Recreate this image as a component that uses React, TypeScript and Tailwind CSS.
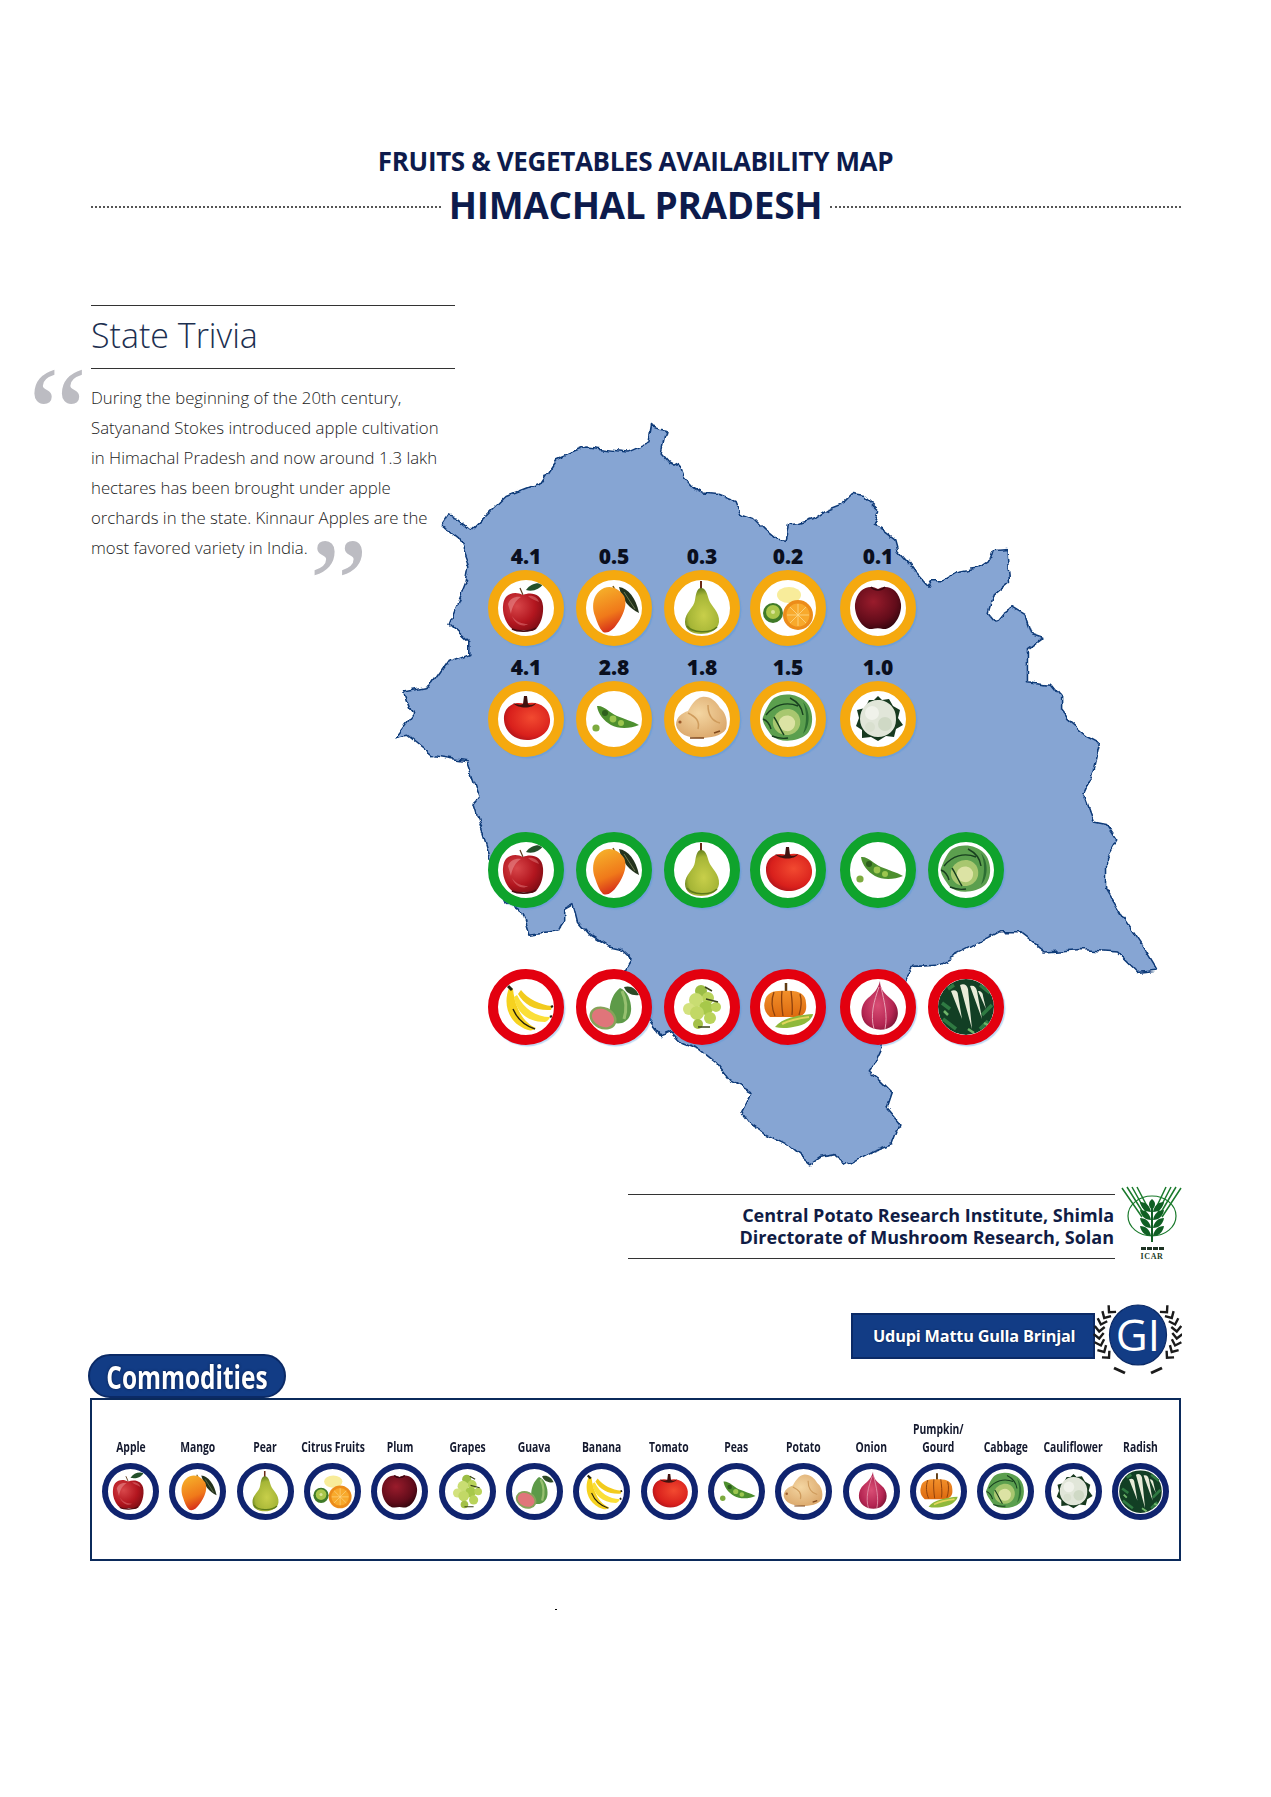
import type { ReactNode } from "react";

type Fruit =
  | "apple" | "mango" | "pear" | "citrus" | "plum" | "grapes" | "guava" | "banana"
  | "tomato" | "peas" | "potato" | "onion" | "pumpkin" | "cabbage" | "cauliflower" | "radish";

const MAP_PATH =
  "M530 45 L545 50 L557 52 L553 68 L547 95 L565 115 L585 125 L592 145 L610 165 L630 175 L660 178 L690 190 L700 215 L730 225 L750 245 L775 266 L790 268 L797 238 L820 235 L850 225 L880 205 L905 195 L922 178 L945 182 L975 210 L965 240 L985 250 L1005 265 L1012 290 L1030 310 L1045 330 L1070 358 L1078 345 L1100 345 L1125 330 L1150 325 L1170 322 L1195 305 L1200 288 L1225 286 L1227 320 L1230 350 L1200 375 L1190 410 L1205 428 L1220 410 L1235 400 L1260 415 L1272 450 L1295 458 L1265 480 L1265 545 L1310 550 L1330 575 L1330 600 L1345 620 L1380 650 L1408 665 L1395 720 L1375 765 L1395 820 L1420 825 L1440 855 L1420 890 L1420 950 L1450 1000 L1490 1060 L1520 1110 L1480 1115 L1440 1075 L1370 1070 L1300 1075 L1270 1050 L1250 1035 L1213 1035 L1143 1072 L1086 1101 L1044 1103 L1023 1131 L1000 1160 L978 1268 L968 1290 L955 1310 L975 1325 L1000 1350 L990 1380 L1015 1410 L1000 1450 L960 1465 L905 1495 L890 1470 L860 1475 L838 1490 L790 1450 L750 1430 L720 1410 L705 1390 L725 1350 L680 1325 L653 1290 L625 1268 L590 1254 L568 1231 L547 1239 L529 1215 L510 1190 L470 1117 L488 1088 L467 1068 L440 1062 L408 1042 L385 1015 L376 980 L358 990 L358 1015 L345 1035 L288 1042 L274 996 L245 975 L215 900 L180 785 L190 770 L165 700 L100 690 L50 650 L27 655 L60 610 L42 565 L95 555 L130 505 L170 490 L170 465 L133 430 L165 350 L170 320 L150 265 L118 240 L130 222 L150 228 L175 248 L245 180 L310 155 L340 110 L400 85 L480 95 L525 75 Z";

const drawings: Record<Fruit, ReactNode> = {
  apple: (
    <>
      <path d="M22 8 L25 15" stroke="#5c3a1e" strokeWidth="1.2" />
      <path d="M28 10 C32 4 39 2 45 4 C42 9 35 12 28 10Z" fill="#23502a" />
      <path d="M25 15 C18 11 6 12 5 26 C4 38 12 51 20 51 C23 51 25 50 26 50 C28 50 30 51 33 51 C40 51 46 38 45 26 C44 13 32 12 25 15Z" fill="url(#gApple)" />
      <path d="M10 24 C12 18 18 16 23 17 C18 20 14 26 13 34Z" fill="#e8888a" opacity=".6" />
      <path d="M30 16 C35 15 40 18 41 22 C37 20 33 19 30 16Z M14 36 C18 42 24 44 30 44 C26 47 18 46 14 36Z" fill="#e8888a" opacity=".45" />
      <path d="M14 49 C20 52 32 52 38 48" stroke="#4c0c12" strokeWidth="1.6" fill="none" />
    </>
  ),
  mango: (
    <>
      <path d="M27 6 L29 10" stroke="#7a5a12" strokeWidth="1.5" />
      <path d="M33 7 C42 8 50 18 53 33 C44 29 36 20 33 7Z" fill="#24331c" />
      <path d="M38 12 L49 29" stroke="#7d8a5e" strokeWidth=".8" />
      <path d="M18 8 C26 5 33 9 38 16 C42 24 37 36 31 44 C27 50 22 54 17 52 C13 48 11 42 9 36 C5 26 7 13 18 8Z" fill="url(#gMango)" />
    </>
  ),
  pear: (
    <>
      <path d="M27 1 L27 9" stroke="#6b2a16" strokeWidth="2" />
      <path d="M27 8 C32 8 33 14 35 20 C37 26 46 32 45 42 C44 50 36 54 27 54 C18 54 11 50 11 42 C11 32 20 28 21 20 C22 14 23 8 27 8Z" fill="url(#gPear)" />
      <path d="M13 46 C18 53 36 54 43 47" stroke="#5c7a1a" strokeWidth="1.6" fill="none" />
    </>
  ),
  citrus: (
    <>
      <ellipse cx="29" cy="15" rx="12" ry="8" fill="#f8ec9a" />
      <ellipse cx="13" cy="33" rx="10" ry="10" fill="#3f7a28" />
      <ellipse cx="13" cy="32" rx="7" ry="7" fill="#a9c64a" />
      <circle cx="13" cy="32" r="2" fill="#dbe59a" />
      <circle cx="38" cy="35" r="15" fill="#ec8c1a" />
      <circle cx="38" cy="35" r="11.5" fill="#f8a92c" />
      <path d="M38 24 V46 M27 35 H49 M30 27 L46 43 M46 27 L30 43" stroke="#fbd98c" strokeWidth=".8" />
    </>
  ),
  plum: (
    <>
      <path d="M28 9 C20 4 7 8 5 24 C4 36 13 50 22 49 C26 48 30 48 33 49 C43 50 52 36 51 24 C49 8 36 4 28 9Z" fill="url(#gPlum)" />
      <path d="M21 7 C25 11 31 11 35 7" stroke="#3a0610" strokeWidth="1.6" fill="none" />
    </>
  ),
  grapes: (
    <g fill="#b9d35a">
      <circle cx="27" cy="12" r="6" fill="#9bbd45" />
      <circle cx="34" cy="19" r="6" />
      <circle cx="22" cy="21" r="7" fill="#c9dd72" />
      <circle cx="32" cy="29" r="7" fill="#a7c84a" />
      <circle cx="15" cy="30" r="6" fill="#d3e27e" />
      <circle cx="42" cy="28" r="5" />
      <circle cx="23" cy="34" r="7" fill="#c2d866" />
      <circle cx="36" cy="39" r="6" />
      <circle cx="24" cy="45" r="5" fill="#a4c048" />
      <path d="M32 20 L44 23 M24 48 H36 M31 8 L38 12" stroke="#38421a" strokeWidth="1.5" />
    </g>
  ),
  guava: (
    <>
      <path d="M38 8 C44 6 50 9 53 16 C46 17 40 14 38 8Z" fill="#2d4a26" />
      <path d="M34 9 C42 12 46 24 45 32 C44 42 36 46 28 44 C20 36 24 16 34 9Z" fill="#5d9a48" />
      <path d="M36 12 C40 20 41 30 38 40" stroke="#97c070" strokeWidth="3" fill="none" />
      <ellipse cx="17" cy="39" rx="14" ry="11" transform="rotate(25 17 39)" fill="#86a35a" />
      <ellipse cx="17" cy="39" rx="11.5" ry="8.5" transform="rotate(25 17 39)" fill="#e0757a" />
    </>
  ),
  banana: (
    <>
      <path d="M11 9 C5 24 9 44 30 51 C33 52 36 51 38 49 C26 44 17 30 15 10Z" fill="#f6d21f" />
      <path d="M16 18 C18 32 28 43 47 43 C50 42 52 39 52 38 C38 38 26 30 19 16Z" fill="#fbdf38" />
      <path d="M20 15 C26 26 38 32 53 31 C54 28 55 27 54 27 C42 26 30 20 23 11Z" fill="#f2cb1d" />
      <path d="M15 30 C20 42 28 47 37 50" stroke="#26200e" strokeWidth="1.4" fill="none" />
      <path d="M10 7 L14 11" stroke="#22200e" strokeWidth="3" />
      <path d="M52 38 L54 37 M53 28 L55 27" stroke="#22200e" strokeWidth="2.5" />
    </>
  ),
  tomato: (
    <>
      <path d="M27 13 C16 9 5 16 6 29 C7 42 18 49 29 49 C41 49 53 41 52 28 C51 16 39 9 27 13Z" fill="url(#gTomato)" />
      <path d="M15 12 C20 14 23 14 25 13 L26 5 L29 5 L30 13 C33 15 36 13 38 12 C35 18 20 18 15 12Z" fill="#41120f" />
    </>
  ),
  peas: (
    <>
      <path d="M11 15 C18 14 24 22 31 25 C38 28 46 30 53 34 C44 38 32 38 25 34 C18 30 12 23 11 15Z" fill="#4d8f2f" />
      <circle cx="19" cy="22" r="3" fill="#2d5f1c" />
      <circle cx="27" cy="28" r="3.4" fill="#9cc64f" />
      <circle cx="35" cy="32" r="3" fill="#9cc64f" />
      <circle cx="10" cy="37" r="3.6" fill="#7dab3f" />
    </>
  ),
  potato: (
    <>
      <path d="M28 6 C36 5 42 10 46 17 C52 22 54 30 52 38 C48 45 36 47 26 47 C14 47 4 43 2 34 C2 26 8 22 14 20 C18 13 22 7 28 6Z" fill="url(#gPotato)" />
      <path d="M14 22 C22 26 26 30 24 38 M34 14 C34 24 38 30 46 32" stroke="#cf9c5d" strokeWidth="1.5" fill="none" />
      <circle cx="6" cy="31" r="1.6" fill="#9c5a2a" />
      <path d="M16 47 H30 M40 42 L46 40" stroke="#80481c" strokeWidth="1.6" />
    </>
  ),
  onion: (
    <>
      <path d="M30 2 C30 10 34 14 41 20 C50 27 50 40 42 47 C36 52 24 52 17 46 C9 39 10 26 18 19 C24 14 28 10 30 2Z" fill="url(#gOnion)" />
      <path d="M29 8 C24 22 20 36 24 50 M31 8 C34 22 38 36 35 50" stroke="#e7a2b5" strokeWidth="1" fill="none" />
    </>
  ),
  pumpkin: (
    <>
      <path d="M26 4 V13" stroke="#5e3a12" strokeWidth="2.5" />
      <path d="M5 22 C6 14 14 11 26 12 C38 11 46 15 46 24 C47 32 45 36 38 38 L10 38 C5 34 3 28 5 22Z" fill="url(#gPumpkin)" />
      <path d="M14 13 C11 21 12 30 15 37 M22 12 C21 20 22 30 23 37 M31 12 C32 20 33 28 32 36 M40 15 C42 22 41 30 39 36" stroke="#8f420d" strokeWidth="1.3" fill="none" />
      <path d="M15 48 C22 39 38 36 53 35 C53 38 48 45 38 47 C30 49 22 50 15 48Z" fill="#8fb83a" />
      <path d="M22 45 C30 41 40 39 49 38" stroke="#e3d65c" strokeWidth="2.2" fill="none" />
    </>
  ),
  cabbage: (
    <>
      <path d="M14 7 C24 1 38 3 46 11 C54 19 54 36 47 43 C38 51 20 52 12 45 C9 41 1 31 3 26 C5 22 8 12 14 7Z" fill="#5b9f4e" />
      <path d="M43 11 C51 20 50 36 43 43 C47 32 47 20 43 11Z" fill="#2d6e33" />
      <path d="M14 26 C20 16 34 15 39 25 C43 34 37 44 27 44 C17 44 10 35 14 26Z" fill="#a8c76f" />
      <path d="M20 28 C25 22 33 24 35 30 C36 37 31 41 26 40 C20 39 17 33 20 28Z" fill="#dce3a4" />
      <path d="M6 24 C14 14 26 10 38 15 M3 28 C8 30 10 34 11 38 M12 45 C17 47 22 48 28 47 M14 26 C18 32 20 38 24 44 M30 7 C36 10 42 16 43 24" stroke="#173f1f" strokeWidth="1.4" fill="none" />
    </>
  ),
  cauliflower: (
    <>
      <path d="M28 5 L32 9 L39 8 L43 15 L50 19 L48 27 L53 34 L46 38 L44 46 L36 45 L28 50 L21 46 L12 47 L12 39 L6 35 L9 27 L7 19 L15 17 L19 9 L24 9Z" fill="#17391f" />
      <path d="M28 9 C38 9 47 17 46 29 C46 39 38 46 28 46 C18 46 10 38 10 28 C10 17 18 9 28 9Z" fill="#e1e6d9" />
      <circle cx="22" cy="22" r="7" fill="#f0f2ea" />
      <circle cx="35" cy="33" r="7" fill="#cfd9c5" />
      <circle cx="20" cy="36" r="5" fill="#d9e0cf" />
    </>
  ),
  radish: (
    <>
      <circle cx="28" cy="28" r="28" fill="#123f24" />
      <path d="M4 24 L12 30 M5 40 L18 50 M44 36 L54 26 M42 50 L50 42 M42 6 L52 14 M10 10 L16 6" stroke="#2f7a42" strokeWidth="3.5" />
      <path d="M6 32 L10 36 M46 44 L50 46 M30 50 L36 54" stroke="#6fb56a" strokeWidth="2.5" />
      <path d="M13 12 C17 10 20 12 20 16 L24 40 Z M22 6 C26 4 29 6 30 10 L34 50 Z M32 7 C36 6 38 8 39 12 L44 40 Z M40 12 C43 12 45 14 45 17 L48 30 Z" fill="#e8ecd8" />
    </>
  ),
};

const FruitBadge = ({ fruit, ring, big }: { fruit: Fruit; ring: string; big?: boolean }) => (
  <div
    className={`${big ? "w-[76px] h-[76px] border-[10px] shadow-[1.5px_1.5px_1px_rgba(70,150,225,0.35)]" : "w-[57px] h-[57px] border-[6px]"} ${ring} rounded-full bg-white overflow-hidden shrink-0`}>
    <svg viewBox="0 0 56 56" className={`w-full h-full ${big ? "blur-[0.5px]" : "scale-95 blur-[0.4px]"}`}>
      {drawings[fruit]}
    </svg>
  </div>
);

const MarkerRow = ({
  fruits,
  values,
  ring,
  className,
}: {
  fruits: Fruit[];
  values?: string[];
  ring: string;
  className: string;
}) => (
  <div className={`grid grid-cols-[88px_88px_86px_90px_88px_76px] ${className}`}>
    {fruits.map((fruit, i) => (
      <div key={fruit} className="flex flex-col items-center w-[76px]">
        {values && (
          <span className="h-[24px] mb-[2px] text-[21px] leading-[24px] font-extrabold text-[#0a0f1e]">
            {values[i]}
          </span>
        )}
        <FruitBadge fruit={fruit} ring={ring} big />
      </div>
    ))}
  </div>
);

const commodities: { fruit: Fruit; label: ReactNode }[] = [
  { fruit: "apple", label: "Apple" },
  { fruit: "mango", label: "Mango" },
  { fruit: "pear", label: "Pear" },
  { fruit: "citrus", label: "Citrus Fruits" },
  { fruit: "plum", label: "Plum" },
  { fruit: "grapes", label: "Grapes" },
  { fruit: "guava", label: "Guava" },
  { fruit: "banana", label: "Banana" },
  { fruit: "tomato", label: "Tomato" },
  { fruit: "peas", label: "Peas" },
  { fruit: "potato", label: "Potato" },
  { fruit: "onion", label: "Onion" },
  { fruit: "pumpkin", label: <>Pumpkin/<br />Gourd</> },
  { fruit: "cabbage", label: "Cabbage" },
  { fruit: "cauliflower", label: "Cauliflower" },
  { fruit: "radish", label: "Radish" },
];

const Gradients = () => (
  <svg className="absolute w-0 h-0">
    <defs>
      <radialGradient id="gApple" cx="35%" cy="35%" r="75%">
        <stop offset="0%" stopColor="#d8474a" />
        <stop offset="60%" stopColor="#b3161f" />
        <stop offset="100%" stopColor="#7c0d14" />
      </radialGradient>
      <linearGradient id="gMango" x1="0.3" y1="0" x2="0.6" y2="1">
        <stop offset="0%" stopColor="#f6b02a" />
        <stop offset="60%" stopColor="#f0791a" />
        <stop offset="100%" stopColor="#d3261a" />
      </linearGradient>
      <radialGradient id="gPear" cx="55%" cy="60%" r="60%">
        <stop offset="0%" stopColor="#c8cf4a" />
        <stop offset="75%" stopColor="#a5b536" />
        <stop offset="100%" stopColor="#65801f" />
      </radialGradient>
      <radialGradient id="gPlum" cx="40%" cy="35%" r="70%">
        <stop offset="0%" stopColor="#9a1c2c" />
        <stop offset="70%" stopColor="#620c1a" />
        <stop offset="100%" stopColor="#35060e" />
      </radialGradient>
      <radialGradient id="gTomato" cx="60%" cy="40%" r="70%">
        <stop offset="0%" stopColor="#f24a30" />
        <stop offset="70%" stopColor="#d9201c" />
        <stop offset="100%" stopColor="#a3111a" />
      </radialGradient>
      <radialGradient id="gOnion" cx="45%" cy="50%" r="60%">
        <stop offset="0%" stopColor="#d94e75" />
        <stop offset="70%" stopColor="#b42552" />
        <stop offset="100%" stopColor="#7e1536" />
      </radialGradient>
      <radialGradient id="gPotato" cx="45%" cy="40%" r="70%">
        <stop offset="0%" stopColor="#f4d6a2" />
        <stop offset="100%" stopColor="#d9a467" />
      </radialGradient>
      <linearGradient id="gPumpkin" x1="0" y1="0" x2="0" y2="1">
        <stop offset="0%" stopColor="#f2902a" />
        <stop offset="100%" stopColor="#dd6a10" />
      </linearGradient>
      <filter id="roughEdge" x="-2%" y="-2%" width="104%" height="104%">
        <feTurbulence type="fractalNoise" baseFrequency="0.035" numOctaves="3" seed="4" />
        <feDisplacementMap in="SourceGraphic" scale="16" xChannelSelector="R" yChannelSelector="G" />
      </filter>
    </defs>
  </svg>
);

const wheatLeaves = [18, 26, 34, 42];

const IcarLogo = () => (
  <svg viewBox="0 0 61 74" className="w-[61px] h-[74px] ml-[6px] shrink-0">
    <g stroke="#1a7a2c" strokeWidth="1.5" fill="none">
      <path d="M1 2 L21 31 M6 1 L23 28 M11 1 L25 26 M16 1 L27 22" />
      <path d="M60 2 L41 31 M55 1 L39 28 M50 1 L37 26 M45 1 L35 22" />
      <ellipse cx="31" cy="30" rx="24" ry="20" strokeWidth="1.2" />
    </g>
    <g fill="#0f5f23">
      <path d="M31 13 C35 16 35 20 31 24 C27 20 27 16 31 13Z" />
      {wheatLeaves.map((y) => (
        <g key={y}>
          <path d={`M30 ${y + 8} C24 ${y + 8} 20 ${y + 4} 19 ${y - 2} C25 ${y - 2} 29 ${y + 2} 30 ${y + 8}Z`} />
          <path d={`M32 ${y + 8} C38 ${y + 8} 42 ${y + 4} 43 ${y - 2} C37 ${y - 2} 33 ${y + 2} 32 ${y + 8}Z`} />
        </g>
      ))}
      <path d="M30 20 H32 V56 H30Z" />
    </g>
    <path d="M20 62.5 H43" stroke="#1e3324" strokeWidth="3" strokeDasharray="5 1" />
    <text x="31" y="73" textAnchor="middle" fontSize="8" fontWeight="700" letterSpacing="0.6" fill="#26402a" fontFamily="'Liberation Serif', serif">ICAR</text>
  </svg>
);

const laurelAngles = [222, 210, 198, 186, 174, 162, 150, 138];

const GiEmblem = () => (
  <svg viewBox="0 0 95 78" className="w-[95px] h-[78px] -ml-[8px] relative shrink-0">
    <ellipse cx="51" cy="38" rx="30.5" ry="32" fill="#fff" />
    <ellipse cx="51" cy="38" rx="28.5" ry="30" fill="#123c85" stroke="#0b2a66" strokeWidth="1.2" />
    <text x="51" y="54" textAnchor="middle" fontSize="44" fontWeight="400" fill="#fff" fontFamily="'Open Sans', sans-serif">GI</text>
    {[0, 1].map((side) => (
      <g key={side} transform={side ? "translate(102 0) scale(-1 1)" : undefined} stroke="#1b1b1b" strokeWidth="2.4" fill="none">
        {laurelAngles.map((a) => {
          const x = 51 + 39 * Math.cos((a * Math.PI) / 180);
          const y = 38 + 34 * Math.sin((a * Math.PI) / 180);
          return <path key={a} d="M-5 -5 L0 0 L5 -5" transform={`translate(${x} ${y}) rotate(${a - 180})`} />;
        })}
        <path d="M27 71 L38 76" strokeWidth="3" />
      </g>
    ))}
  </svg>
);

const App = () => {
  return (
    <div className="w-[1271px] h-[1797px] bg-white overflow-hidden font-['Open_Sans',sans-serif]">
      <Gradients />

      {/* encabezado */}
      <div className="pt-[146px] flex flex-col items-center text-[#0d1b4c] font-bold">
        <h1 className="text-[26px] leading-[30px] tracking-[-0.35px]">FRUITS &amp; VEGETABLES AVAILABILITY MAP</h1>
        <div className="w-[1090px] mt-[4px] flex items-center gap-[8px]">
          <span className="flex-1 border-t-2 border-dotted border-[#555] mt-[4px]" />
          <h2 className="text-[37px] leading-[50px] tracking-[-0.35px]">HIMACHAL PRADESH</h2>
          <span className="flex-1 border-t-2 border-dotted border-[#555] mt-[4px]" />
        </div>
      </div>

      {/* trivia + mapa */}
      <div className="flex mt-[75px]">
        <div className="ml-[91px] w-[364px] shrink-0 relative">
          <div className="border-y border-[#333] h-[64px] flex items-center pb-[4px] text-[#1c2f50] text-[34px] font-light leading-none">
            State Trivia
          </div>
          <span className="absolute left-[-63px] top-[42px] text-[134px] leading-none text-[#bcbcc2] font-['Liberation_Serif',serif]">“</span>
          <p className="mt-[14px] text-[16.8px] leading-[30px] font-light text-[#222]">
            During the beginning of the 20th century,
            <br />
            Satyanand Stokes introduced apple cultivation
            <br />
            in Himachal Pradesh and now around 1.3 lakh
            <br />
            hectares has been brought under apple
            <br />
            orchards in the state. Kinnaur Apples are the
            <br />
            most favored variety in India.
          </p>
          <span className="absolute left-[218px] top-[213px] text-[134px] leading-none text-[#bcbcc2] font-['Liberation_Serif',serif]">”</span>
        </div>

        <div className="relative w-[800px] h-[770px] mt-[95px] -ml-[75px] shrink-0 pl-[108px] pt-[144px]">
          <svg viewBox="0 0 1568 1509" className="absolute inset-0 w-full h-full">
            <g transform="translate(4 7)">
              <path d={MAP_PATH} fill="#86a5d3" stroke="#0f3a78" strokeWidth="3" strokeLinejoin="round" filter="url(#roughEdge)" />
            </g>
          </svg>
          <div className="relative">
            <MarkerRow
              fruits={["apple", "mango", "pear", "citrus", "plum"]}
              values={["4.1", "0.5", "0.3", "0.2", "0.1"]}
              ring="border-[#f5a90f]"
              className=""
            />
            <MarkerRow
              fruits={["tomato", "peas", "potato", "cabbage", "cauliflower"]}
              values={["4.1", "2.8", "1.8", "1.5", "1.0"]}
              ring="border-[#f5a90f]"
              className="mt-[9px]"
            />
            <MarkerRow
              fruits={["apple", "mango", "pear", "tomato", "peas", "cabbage"]}
              ring="border-[#0fa32c]"
              className="mt-[75px]"
            />
            <MarkerRow
              fruits={["banana", "guava", "grapes", "pumpkin", "onion", "radish"]}
              ring="border-[#e3000f]"
              className="mt-[61px]"
            />
          </div>
        </div>
      </div>

      {/* institutos */}
      <div className="mt-[16px] pr-[89px] flex justify-end items-start">
        <div className="mt-[8px] w-[487px] h-[65px] border-y border-[#333] flex flex-col justify-center items-end pr-[1px] pb-[2px] text-[18px] leading-[22px] font-bold text-[#101c45]">
          <span>Central Potato Research Institute, Shimla</span>
          <span>Directorate of Mushroom Research, Solan</span>
        </div>
        <IcarLogo />
      </div>

      {/* commodities / GI */}
      <div className="mt-[37px] ml-[88px] mr-[89px] h-[101px] flex justify-between items-end">
        <div className="w-[198px] h-[44px] rounded-full border-2 border-[#0b2a66] bg-[#123c85] flex items-center justify-center text-white font-bold text-[33px] leading-none [text-shadow:0_0_3px_#071a44]">
          <span className="inline-block scale-x-[0.74] whitespace-nowrap">Commodities</span>
        </div>
        <div className="self-start flex items-center h-[78px]">
          <div className="w-[244px] h-[46px] bg-[#123c85] border-2 border-[#0b2a66] pl-[20px] flex items-center text-white text-[16.3px] font-bold tracking-[-0.2px] [text-shadow:0_0_2px_#071a44]">
            Udupi Mattu Gulla Brinjal
          </div>
          <GiEmblem />
        </div>
      </div>

      <div className="ml-[90px] w-[1091px] h-[163px] border-2 border-[#0b2a5b] px-[5px]">
        <div className="grid grid-cols-16">
          {commodities.map(({ fruit, label }) => (
            <div key={fruit} className="flex flex-col items-center">
              <div className="h-[56px] flex items-end justify-center text-center whitespace-nowrap text-[14px] leading-[18px] font-bold text-[#14192e]">
                <span className="inline-block scale-x-[0.74]">{label}</span>
              </div>
              <div className="mt-[7px]">
                <FruitBadge fruit={fruit} ring="border-[#10246f]" />
              </div>
            </div>
          ))}
        </div>
      </div>

      <div className="ml-[555px] mt-[48px] w-[2px] h-px bg-black" />
    </div>
  );
};

export default App;
